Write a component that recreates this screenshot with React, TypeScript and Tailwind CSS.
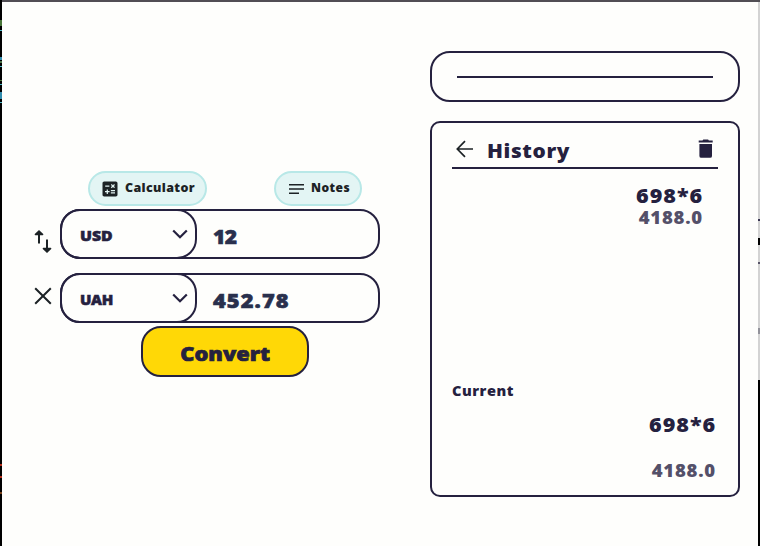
import React from "react";

const ink = "text-[#25213f]";

function Chevron() {
  return (
    <svg className="h-4 w-4" viewBox="0 0 16 16" fill="none" stroke="#25213f" strokeWidth="2.200">
      <path d="M1.200 4.500 8 11.200 14.800 4.500" />
    </svg>
  );
}

function CurrencyField({ code, amount, codeClass, amountClass }: { code: string; amount: string; codeClass: string; amountClass: string }) {
  return (
    <div className="flex h-[50px] w-[320px] rounded-[20px] border-2 border-[#25213f]">
      <div className="-my-[2px] -ml-[2px] flex h-[50px] w-[137px] items-center justify-between rounded-[20px] border-2 border-[#25213f] pr-[7px] pl-[18px]">
        <span className={"mt-[3px] origin-left text-[14px] leading-5 font-extrabold [-webkit-text-stroke:0.5px_#25213f] " + codeClass}>{code}</span>
        <Chevron />
      </div>
      <span className={"mt-[14px] ml-[16px] h-6 origin-left text-[20px] leading-6 font-extrabold text-[#29304d] [-webkit-text-stroke:0.6px_#29304d] " + amountClass}>{amount}</span>
    </div>
  );
}

export default function App() {
  return (
    <div className={"flex h-[546px] w-[760px] overflow-hidden bg-[#fefefc] font-['Open_Sans','Noto_Sans',sans-serif] " + ink}>
      <div className="flex w-[2px] shrink-0 flex-col bg-black">
        <i className="mt-[20px] h-[6px] bg-[#477438]" />
        <i className="mt-[4px] h-px bg-[#4bb9c8]" />
        <i className="mt-[26px] h-[3px] bg-[#318cad]" />
        <i className="mt-px h-[2px] bg-[#497447]" />
        <i className="mt-[3px] h-px bg-[#4bb9c8]" />
        <i className="mt-[13px] h-px bg-[#477438]" />
        <i className="mt-[3px] h-px bg-[#4bb9c8]" />
        <i className="mt-[7px] h-[7px] bg-[#318cad]" />
        <i className="mt-[3px] h-px bg-[#4bb9c8]" />
        <i className="mt-[361px] h-[2px] bg-[#b52d19]" />
        <i className="mt-[10px] h-[2px] bg-[#b52d19]" />
        <i className="mt-[14px] h-[2px] bg-[#794018]" />
      </div>
      <div className="flex min-w-0 flex-1 border-t-2 border-[#514e54]">
        <main className="flex w-[378px] shrink-0 flex-col pt-[169px]">
          <div className="flex h-[35px] justify-between pr-[18px] pl-[86px]">
            <button className="flex h-[35px] w-[119px] items-center rounded-full border-2 border-[#b8e8e7] bg-[#e3f5f4] pl-[10px] text-[#1c2225]">
              <svg className="h-5 w-5" viewBox="0 0 24 24" fill="currentColor">
                <path d="M19 3H5c-1.100 0-2 .9-2 2v14c0 1.100.9 2 2 2h14c1.100 0 2-.9 2-2V5c0-1.100-.9-2-2-2zm-5.970 4.060L14.090 6l1.410 1.410L16.910 6l1.060 1.060-1.410 1.410 1.410 1.410-1.060 1.060-1.410-1.400-1.410 1.410-1.060-1.060 1.410-1.410-1.410-1.420zm-6.780.660h5v1.500h-5v-1.500zM11.500 16h-2v2H8v-2H6v-1.500h2v-2h1.500v2h2V16zm6.500 1.250h-5v-1.500h5v1.500zm0-2.500h-5v-1.500h5v1.500z" />
              </svg>
              <span className="-mt-[2px] ml-[5px] origin-left scale-x-[1.04] text-[12px] font-extrabold tracking-[0.35px]">Calculator</span>
            </button>
            <button className="flex h-[35px] w-[88px] items-center rounded-full border-2 border-[#b8e8e7] bg-[#e3f5f4] pl-[12px] text-[#1c2225]">
              <svg className="h-[12px] w-[16px]" viewBox="0 0 16 12" stroke="currentColor" strokeWidth="1.500">
                <path d="M1 1.700h15M1 6h15M1 10.300h10" />
              </svg>
              <span className="-mt-[2px] ml-[7px] text-[12px] font-extrabold tracking-[0.45px]">Notes</span>
            </button>
          </div>
          <div className="mt-[2px] flex pt-px">
            <div className="flex w-[58px] justify-center pt-[21px] pr-[1px] pl-[25px]">
              <svg className="h-[23px] w-[18px]" viewBox="0 0 18 23" fill="#1c2225">
                <path d="M5 0 9.500 4.300 8.800 5.200H6v8.300H4V5.200H1.200L.5 4.300zM13 23l-4.500-4.300.7-.9H12V9.500h2v8.300h2.800l.7.900z" />
              </svg>
            </div>
            <CurrencyField code="USD" amount="12" codeClass="scale-x-[1.13]" amountClass="scale-x-[1.05] tracking-[-0.500px]" />
          </div>
          <div className="mt-[14px] flex">
            <div className="flex w-[58px] justify-center pt-[14px] pl-[24px]">
              <svg className="h-[18px] w-[18px]" viewBox="0 0 18 18" fill="none" stroke="#1c2225" strokeWidth="2">
                <path d="m1.200 1.200 15.600 15.600M16.800 1.200 1.200 16.800" />
              </svg>
            </div>
            <CurrencyField code="UAH" amount="452.78" codeClass="scale-x-[1.08] tracking-[-0.300px]" amountClass="scale-x-[1.09] tracking-[1px]" />
          </div>
          <button className="mt-[3px] ml-[139px] flex h-[51px] w-[168px] items-center justify-center rounded-[20px] border-2 border-[#25213f] bg-[#ffd806]">
            <span className="mt-[4px] scale-x-[1.09] text-[20px] leading-6 font-extrabold [-webkit-text-stroke:0.7px_#25213f]">Convert</span>
          </button>
        </main>
        <aside className="ml-[50px] w-[310px] shrink-0 pt-[49px]">
          <div className="flex h-[51px] items-center rounded-[20px] border-2 border-[#25213f] px-[25px]">
            <div className="h-[2px] w-full bg-[#25213f]" />
          </div>
          <section className="mt-[19px] flex h-[376px] flex-col rounded-[10px] border-2 border-[#25213f] px-[20px]">
            <header className="flex h-[46px] items-center border-b-2 border-[#25213f] px-[4px]">
              <svg className="mt-[7px] h-[18px] w-[18px]" viewBox="0 0 18 18" fill="none" stroke="#1c2225" strokeWidth="1.700">
                <path d="M17 9H1.500M9 1.200 1.300 9 9 16.800" />
              </svg>
              <h1 className="mt-[12px] ml-[13px] origin-left scale-x-[1.04] text-[20px] leading-6 font-extrabold tracking-[0.6px]">History</h1>
              <svg className="mt-[6px] ml-auto h-[19px] w-[16px]" viewBox="0 0 16 19" fill="#25213f">
                <path d="M.7 1.500h3.800L5.300.4h4.800l.8 1.100h3.800v1.900H.7zM1.400 4.900H14v12q0 1.900-1.900 1.900H3.300q-1.900 0-1.900-1.900z" />
              </svg>
            </header>
            <div className="flex flex-col items-end pt-[14px] pr-[15px]">
              <span className="origin-right scale-x-[1.08] text-[20px] leading-[26px] font-extrabold tracking-[0.9px]">698*6</span>
              <span className="origin-right scale-x-[1.09] text-[17px] leading-[18px] font-extrabold tracking-[0.7px] text-[#545069]">4188.0</span>
            </div>
            <div className="mt-auto flex flex-col items-start pr-[2px] pb-[14px]">
              <span className="mt-px origin-left scale-x-[1.04] text-[14px] leading-5 font-extrabold tracking-[0.5px]">Current</span>
              <span className="mt-[12px] origin-right scale-x-[1.08] self-end text-[20px] leading-6 font-extrabold tracking-[0.9px]">698*6</span>
              <span className="mt-[24px] origin-right scale-x-[1.09] self-end text-[17px] leading-5 font-extrabold tracking-[0.7px] text-[#545069]">4188.0</span>
            </div>
          </section>
        </aside>
      </div>
      <div className="flex w-[2px] shrink-0 flex-col bg-[#d3d3d3]">
        <i className="h-[2px] bg-[#514e54]" />
        <i className="mt-[217px] h-[2px] bg-[#383451]" />
        <i className="mt-[17px] h-[7px] bg-black" />
        <i className="mt-[17px] h-[2px] bg-[#585568]" />
        <i className="mt-[64px] h-[6px] bg-[#92929a]" />
        <i className="mt-[46px] flex-1 bg-black" />
      </div>
    </div>
  );
}
